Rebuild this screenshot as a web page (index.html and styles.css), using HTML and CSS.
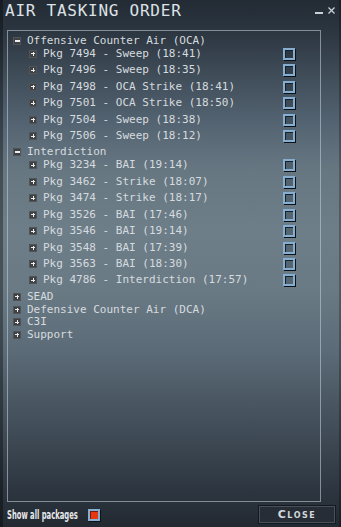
FILE: index.html
```html
<!DOCTYPE html>
<html lang="en">
<head>
    <meta charset="UTF-8">
    <meta name="viewport" content="width=device-width, initial-scale=1.0">
    <title>Air Tasking Order</title>
    <link rel="stylesheet" href="styles.css">
</head>
<body>
    <div class="window">
        <div class="titlebar">
            <h1 class="title">AIR TASKING ORDER</h1>
            <div class="controls">
                <span class="min-btn"></span>
                <svg class="close-x" width="7" height="7" viewBox="0 0 7 7">
                    <path d="M0.5 0.5 L6.5 6.5 M6.5 0.5 L0.5 6.5" stroke="#c9d0d6" stroke-width="1.3" fill="none"/>
                </svg>
            </div>
        </div>

        <div class="panel">
            <div class="cat"><span class="toggle minus"></span><span class="label">Offensive Counter Air (OCA)</span></div>
            <div class="pkgs">
                <div class="pkg"><span class="toggle plus"></span><span class="label">Pkg 7494 - Sweep (18:41)</span><span class="check"></span></div>
                <div class="pkg"><span class="toggle plus"></span><span class="label">Pkg 7496 - Sweep (18:35)</span><span class="check"></span></div>
                <div class="pkg"><span class="toggle plus"></span><span class="label">Pkg 7498 - OCA Strike (18:41)</span><span class="check"></span></div>
                <div class="pkg"><span class="toggle plus"></span><span class="label">Pkg 7501 - OCA Strike (18:50)</span><span class="check"></span></div>
                <div class="pkg"><span class="toggle plus"></span><span class="label">Pkg 7504 - Sweep (18:38)</span><span class="check"></span></div>
                <div class="pkg"><span class="toggle plus"></span><span class="label">Pkg 7506 - Sweep (18:12)</span><span class="check"></span></div>
            </div>

            <div class="cat"><span class="toggle minus"></span><span class="label">Interdiction</span></div>
            <div class="pkgs">
                <div class="pkg"><span class="toggle plus"></span><span class="label">Pkg 3234 - BAI (19:14)</span><span class="check"></span></div>
                <div class="pkg"><span class="toggle plus"></span><span class="label">Pkg 3462 - Strike (18:07)</span><span class="check"></span></div>
                <div class="pkg"><span class="toggle plus"></span><span class="label">Pkg 3474 - Strike (18:17)</span><span class="check"></span></div>
                <div class="pkg"><span class="toggle plus"></span><span class="label">Pkg 3526 - BAI (17:46)</span><span class="check"></span></div>
                <div class="pkg"><span class="toggle plus"></span><span class="label">Pkg 3546 - BAI (19:14)</span><span class="check"></span></div>
                <div class="pkg"><span class="toggle plus"></span><span class="label">Pkg 3548 - BAI (17:39)</span><span class="check"></span></div>
                <div class="pkg"><span class="toggle plus"></span><span class="label">Pkg 3563 - BAI (18:30)</span><span class="check"></span></div>
                <div class="pkg"><span class="toggle plus"></span><span class="label">Pkg 4786 - Interdiction (17:57)</span><span class="check"></span></div>
            </div>

            <div class="cat"><span class="toggle plus"></span><span class="label">SEAD</span></div>
            <div class="cat"><span class="toggle plus"></span><span class="label">Defensive Counter Air (DCA)</span></div>
            <div class="cat"><span class="toggle plus"></span><span class="label">C3I</span></div>
            <div class="cat"><span class="toggle plus"></span><span class="label">Support</span></div>
        </div>

        <div class="footer">
            <div class="show-all">
                <span class="show-text"><span class="squeeze">Show all packages</span></span>
                <span class="check red"></span>
            </div>
            <div class="close-btn">Close</div>
        </div>
    </div>
</body>
</html>
```

FILE: styles.css
```css
body {
    margin: 0;
    background-color: #1b2128;
}
.window {
    width: 341px;
    height: 527px;
    display: flex;
    flex-direction: column;
    background: linear-gradient(to bottom,
        #232b34 0px,
        #2b3540 30px,
        #3d4a56 70px,
        #536270 120px,
        #667782 170px,
        #6d7e89 230px,
        #6a7a85 290px,
        #5b6b77 350px,
        #47545f 410px,
        #353f4a 465px,
        #2a323c 500px,
        #222931 527px);
    box-shadow: inset 3px 0 0 rgba(0, 0, 0, 0.35), inset -2px 0 0 rgba(0, 0, 0, 0.25);
}
.titlebar {
    height: 30px;
    display: flex;
    justify-content: space-between;
    align-items: flex-start;
    padding: 0 6px 0 5px;
    box-sizing: border-box;
}
.title {
    margin: 0;
    font-family: "DejaVu Sans Mono", monospace;
    font-weight: normal;
    font-size: 16px;
    line-height: 22px;
    letter-spacing: 0.75px;
    color: #dde2e6;
}
.controls {
    display: flex;
    align-items: flex-end;
    gap: 5px;
    padding-top: 7px;
}
.min-btn {
    width: 8px;
    height: 2px;
    background-color: #c9d0d6;
}
.close-x {
    display: block;
}

/* tree panel */
.panel {
    height: 472px;
    margin: 0 20px 0 7px;
    padding: 3.7px 0 0 5px;
    box-sizing: border-box;
    border: 1px solid rgba(190, 202, 212, 0.6);
    font-family: "DejaVu Sans Mono", monospace;
    font-size: 11px;
    color: #d6dbdf;
}
.cat {
    height: 12.6px;
    display: flex;
    align-items: center;
    gap: 6px;
}
.pkg {
    height: 12.6px;
    margin: 0 0 3.9px 16px;
    padding-right: 25px;
    display: flex;
    align-items: center;
    gap: 6px;
}
.label {
    white-space: pre;
    line-height: 12px;
}
.toggle {
    position: relative;
    width: 8px;
    height: 8px;
    flex: none;
    background-color: #3e4042;
    box-shadow: inset 0 0 0 1px #505357;
}
.toggle::before,
.toggle::after {
    content: "";
    position: absolute;
    background-color: #eceff1;
}
.toggle::before {
    left: 2px;
    top: 3.5px;
    width: 4px;
    height: 1px;
}
.toggle.minus::before {
    left: 1.5px;
    top: 3px;
    width: 5px;
    height: 2px;
}
.toggle.plus::after {
    left: 3.5px;
    top: 2px;
    width: 1px;
    height: 4px;
}
.check {
    width: 12px;
    height: 12px;
    flex: none;
    margin-left: auto;
    box-sizing: border-box;
    border: 2px solid #86aed0;
    background-color: rgba(20, 30, 38, 0.25);
    box-shadow: inset 1px 1px 0 #17212a, 1px 1px 0 #0c1116;
}

/* footer */
.footer {
    flex: 1;
    display: flex;
    justify-content: space-between;
    align-items: center;
    padding: 0 6px 0 7px;
}
.show-all {
    display: flex;
    align-items: center;
    gap: 10px;
}
.show-text {
    width: 71px;
    height: 14px;
    font-family: "DejaVu Sans Condensed", "Liberation Sans Narrow", sans-serif;
    font-weight: bold;
    font-size: 12px;
    line-height: 14px;
    color: #e6e8ea;
}
.squeeze {
    display: inline-block;
    white-space: nowrap;
    transform: scaleX(0.63);
    transform-origin: left center;
}
.check.red {
    margin-left: 0;
    background-color: #e6380f;
    box-shadow: inset 1px 1px 0 #7a1a08, 1px 1px 0 #0c1116;
}
.close-btn {
    width: 76px;
    height: 17px;
    box-sizing: border-box;
    display: flex;
    justify-content: center;
    align-items: center;
    background-color: #262d36;
    border: 1px solid #474f59;
    box-shadow: 0 0 0 1px #151a20;
    font-family: "DejaVu Sans", sans-serif;
    font-weight: bold;
    font-size: 11px;
    font-variant: small-caps;
    letter-spacing: 1.5px;
    color: #d3d7db;
}
```
